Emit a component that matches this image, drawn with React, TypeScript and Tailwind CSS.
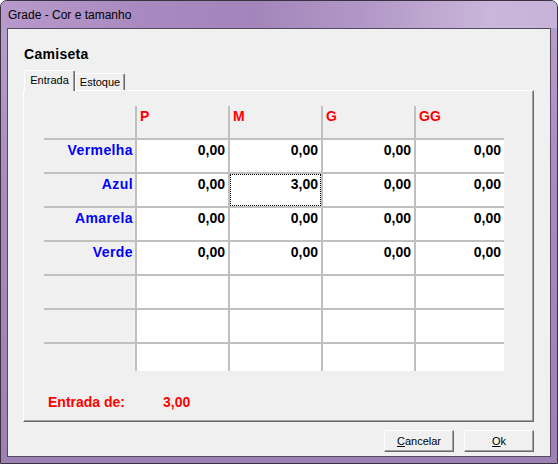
import React from "react";

const rows = [
  { label: "Vermelha", vals: ["0,00", "0,00", "0,00", "0,00"] },
  { label: "Azul", vals: ["0,00", "3,00", "0,00", "0,00"] },
  { label: "Amarela", vals: ["0,00", "0,00", "0,00", "0,00"] },
  { label: "Verde", vals: ["0,00", "0,00", "0,00", "0,00"] },
  { label: "", vals: ["", "", "", ""] },
  { label: "", vals: ["", "", "", ""] },
  { label: "", vals: ["", "", "", ""] },
];

const heads = ["P", "M", "G", "GG"];

function Button({ first, rest }: { first: string; rest: string }) {
  return (
    <div className="w-[70px] h-[22px] border border-t-white border-l-white border-r-[#696969] border-b-[#696969] bg-[#f0f0f0]">
      <div className="w-full h-full flex items-center justify-center shadow-[inset_-1px_-1px_0_#a0a0a0] text-[11px] leading-[13px] text-black">
        <span>
          <span className="underline underline-offset-[1px]">{first}</span>
          {rest}
        </span>
      </div>
    </div>
  );
}

export default function App() {
  return (
    <div className="w-[558px] h-[464px] bg-white font-['Liberation_Sans',Arial,sans-serif] overflow-hidden">
      <div className="w-full h-full flex flex-col rounded-t-[7px] border border-[#3a3240] bg-[linear-gradient(180deg,#b9a2cc_0%,#a88cbe_40%,#9d80b4_100%)] overflow-hidden">
        <div className="h-[27px] shrink-0 flex items-center pl-[7px] bg-[linear-gradient(90deg,#b79acb_0%,#a98ac0_25%,#a385bb_45%,#b197c6_65%,#cab6da_88%,#c7b3d7_100%)]">
          <span className="text-[12px] leading-[14px] text-black pt-[1px]">Grade - Cor e tamanho</span>
        </div>
        <div className="flex-1 flex px-[6px] pb-[6px]">
          <div className="flex-1 border border-[#55495f] bg-[#f0f0f0] flex flex-col pl-[15px] pr-[16px] pt-[17px]">
            <div className="pl-[1px] text-[14px] leading-[16px] font-bold text-black tracking-[0.3px]">Camiseta</div>
            <div className="mt-[8px] h-[20px] flex items-end relative z-10">
              <div className="ml-[1px] w-[51px] h-[21px] -mb-[1px] border-l border-t border-white border-r border-r-[#696969] rounded-t-[2px] bg-[#f0f0f0] shadow-[inset_-1px_0_0_#a0a0a0] flex justify-center pt-[3px] text-[11px] leading-[13px] text-black">
                Entrada
              </div>
              <div className="w-[50px] h-[17px] border-l border-t border-white border-r border-r-[#696969] rounded-t-[2px] shadow-[inset_-1px_0_0_#a0a0a0] flex justify-center pt-[2px] text-[11px] leading-[13px] text-black">
                Estoque
              </div>
            </div>
            <div className="h-[332px] border border-t-white border-l-white border-r-[#696969] border-b-[#696969]">
              <div className="w-full h-full shadow-[inset_-1px_-1px_0_#a0a0a0] pl-[20px] pt-[15px] flex flex-col">
                <div className="w-[460px] h-[265px] grid grid-cols-[91px_91px_91px_91px_88px] grid-rows-[32px_32px_32px_32px_32px_32px_32px_27px] gap-[2px] bg-[#c0c0c0] font-bold text-[14px] leading-[16px] overflow-hidden">
                  <div className="bg-[#f0f0f0]" />
                  {heads.map((h) => (
                    <div key={h} className="bg-[#f0f0f0] pl-[3px] pt-[2px] text-[#ff0000]">
                      {h}
                    </div>
                  ))}
                  {rows.map((r, i) => (
                    <React.Fragment key={i}>
                      <div className="bg-[#f0f0f0] text-right pr-[2px] pt-[2px] text-[#0000ff] tracking-[0.4px]">
                        {r.label}
                      </div>
                      {r.vals.map((v, j) => (
                        <div
                          key={j}
                          className={
                            i === 1 && j === 1
                              ? "bg-white text-right pr-[2px] pt-[1px] text-black border border-dotted border-black"
                              : "bg-white text-right pr-[3px] pt-[2px] text-black"
                          }
                        >
                          {v}
                        </div>
                      ))}
                    </React.Fragment>
                  ))}
                </div>
                <div className="mt-[23px] ml-[4px] flex text-[14px] leading-[16px] font-bold text-[#ff0000]">
                  <span className="w-[115px]">Entrada de:</span>
                  <span>3,00</span>
                </div>
              </div>
            </div>
            <div className="mt-[8px] flex justify-end gap-[10px]">
              <Button first="C" rest="ancelar" />
              <Button first="O" rest="k" />
            </div>
          </div>
        </div>
      </div>
    </div>
  );
}
